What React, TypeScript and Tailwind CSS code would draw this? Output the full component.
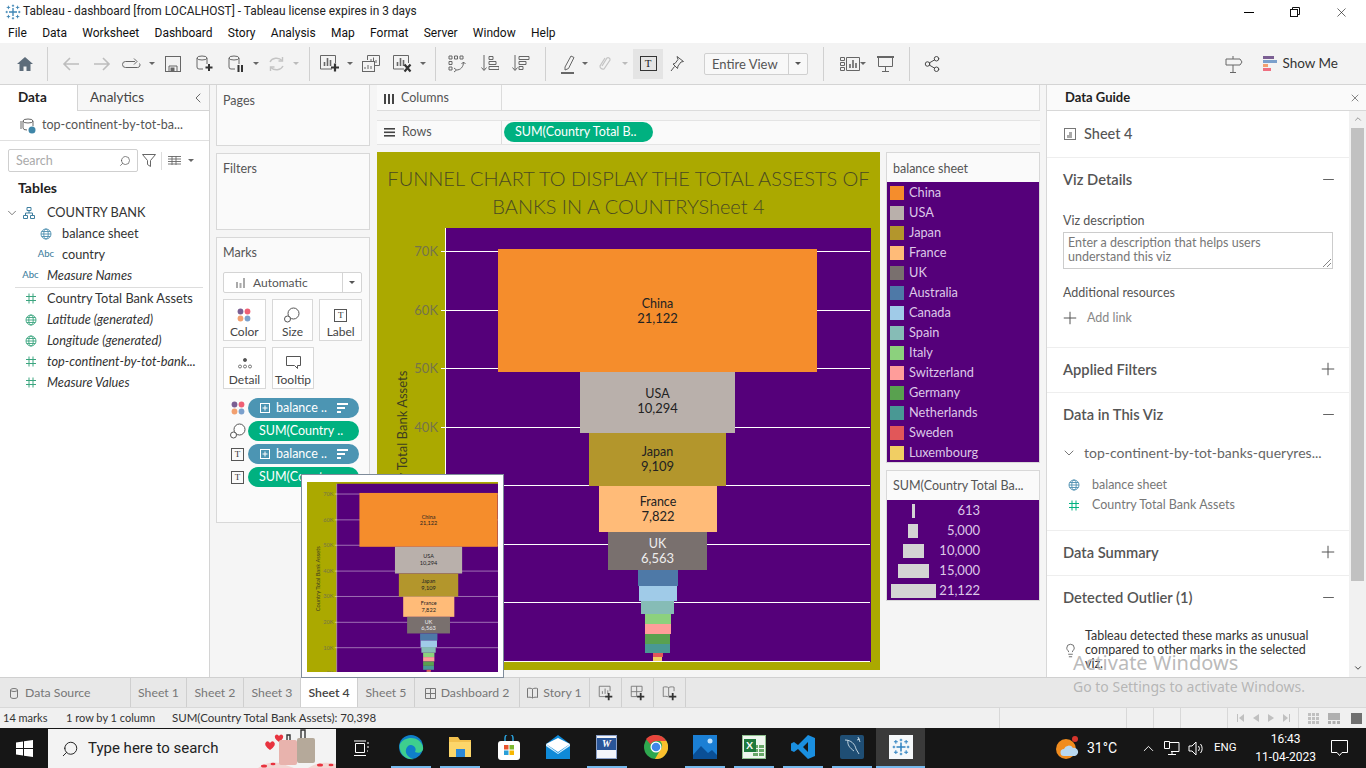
import React from 'react';
import { ChevronDown, ChevronLeft, Minus, Plus, Search, X, Lightbulb, ChevronUp, Share2 } from 'lucide-react';

const BARS = [
  { name: 'China', value: '21,122', color: '#f58d2c', x1: 498, x2: 817, y1: 249, y2: 372, text: '#222', ny: 307.5, vy: 322.5 },
  { name: 'USA', value: '10,294', color: '#b9b0ab', x1: 580, x2: 735, y1: 372, y2: 433, text: '#222', ny: 397.5, vy: 412.5 },
  { name: 'Japan', value: '9,109', color: '#b3962c', x1: 589, x2: 726, y1: 433, y2: 486, text: '#222', ny: 455.5, vy: 470.5 },
  { name: 'France', value: '7,822', color: '#ffbb78', x1: 599, x2: 717, y1: 486, y2: 532, text: '#222', ny: 505.5, vy: 521 },
  { name: 'UK', value: '6,563', color: '#79706e', x1: 608, x2: 707, y1: 532, y2: 570, text: '#eee', ny: 548, vy: 563 },
  { name: 'Australia', color: '#4e79a7', x1: 638, x2: 678, y1: 570, y2: 586 },
  { name: 'Canada', color: '#a0cbe8', x1: 639, x2: 677, y1: 586, y2: 601 },
  { name: 'Spain', color: '#86bcb6', x1: 641, x2: 674, y1: 601, y2: 614 },
  { name: 'Italy', color: '#8cd17d', x1: 645, x2: 671, y1: 614, y2: 624 },
  { name: 'Switzerland', color: '#ff9d9a', x1: 645, x2: 671, y1: 624, y2: 634 },
  { name: 'Germany', color: '#59a14f', x1: 645, x2: 670, y1: 634, y2: 644 },
  { name: 'Netherlands', color: '#499894', x1: 645, x2: 670, y1: 644, y2: 653 },
  { name: 'Sweden', color: '#e15759', x1: 653, x2: 663, y1: 653, y2: 657 },
  { name: 'Luxembourg', color: '#f1ce63', x1: 653, x2: 662, y1: 657, y2: 661 },
];

const TICKS = [
  { label: '70K', y: 251 },
  { label: '60K', y: 310 },
  { label: '50K', y: 368 },
  { label: '40K', y: 427 },
  { label: '30K', y: 485 },
  { label: '20K', y: 544 },
  { label: '10K', y: 602 },
  { label: '0K', y: 661 },
];

const SIZES = [
  { label: '613', w: 'w-[3px]' },
  { label: '5,000', w: 'w-[10px]' },
  { label: '10,000', w: 'w-[21px]' },
  { label: '15,000', w: 'w-[31px]' },
  { label: '21,122', w: 'w-[45px]' },
];

const MENU = ['File', 'Data', 'Worksheet', 'Dashboard', 'Story', 'Analysis', 'Map', 'Format', 'Server', 'Window', 'Help'];

// same drawing for the sheet and for its hover thumbnail, in screenshot units
const FunnelPlot = ({ viewBox, className }: { viewBox: string; className: string }) => (
  <svg viewBox={viewBox} preserveAspectRatio="none" className={className}>
    <rect x="377" y="150" width="503" height="520" fill="#aba900" />
    <rect x="445" y="228" width="426" height="434" fill="#55007a" />
    {TICKS.map((t) => (
      <g key={t.label}>
        <line x1="441" x2="870" y1={t.y + 0.5} y2={t.y + 0.5} stroke="#fff" />
        <text x="438" y={t.y + 5} textAnchor="end" fontSize="13" fill="#75744a">{t.label}</text>
      </g>
    ))}
    <line x1="445.5" x2="445.5" y1="228" y2="662" stroke="#fff" />
    <text transform="translate(407 445) rotate(-90)" textAnchor="middle" fontSize="13" fill="#3d3d20">Country Total Bank Assets</text>
    {BARS.map((b) => (
      <rect key={b.name} x={b.x1} y={b.y1} width={b.x2 - b.x1} height={b.y2 - b.y1} fill={b.color} />
    ))}
    {BARS.filter((b) => b.value).map((b) => (
      <g key={b.name} textAnchor="middle" fill={b.text}>
        <text x={(b.x1 + b.x2) / 2} y={b.ny} fontSize="12.5">{b.name}</text>
        <text x={(b.x1 + b.x2) / 2} y={b.vy} fontSize="13">{b.value}</text>
      </g>
    ))}
  </svg>
);

const Caret = ({ w, color = 'border-t-[#666]' }: { w: string; color?: string }) => (
  <div className={`${w} flex justify-center`}>
    <div className={`w-0 h-0 border-x-[3px] border-x-transparent border-t-[3px] ${color}`}></div>
  </div>
);

const Sep = ({ ml }: { ml: string }) => <div className={`${ml} w-px h-[34px] bg-[#d0d0d0]`}></div>;

const Color4 = () => (
  <svg width="14" height="14" viewBox="0 0 14 14">
    <circle cx="3.5" cy="3.5" r="2.9" fill="#7b5f93" /><circle cx="10.5" cy="3.5" r="2.9" fill="#ef5f74" />
    <circle cx="3.5" cy="10.5" r="2.9" fill="#f2a070" /><circle cx="10.5" cy="10.5" r="2.9" fill="#7ba0cc" />
  </svg>
);
const SizeIc = () => (
  <svg width="16" height="16" viewBox="0 0 16 16" fill="none" stroke="#555">
    <circle cx="9.5" cy="6.5" r="5.5" fill="#fff" /><circle cx="3.5" cy="12" r="3" fill="#fff" />
  </svg>
);
const TextIc = () => (
  <div className="w-[13px] h-[13px] border border-[#555] flex items-center justify-center text-[9px] leading-none text-[#333] [font-family:'Liberation_Serif',serif]">T</div>
);
const Globe = ({ c = '#4d8fb0' }: { c?: string }) => (
  <svg width="12" height="12" viewBox="0 0 12 12" fill="none" stroke={c} strokeWidth="0.9">
    <circle cx="6" cy="6" r="5" /><ellipse cx="6" cy="6" rx="2.2" ry="5" /><path d="M1 6h10M1.7 3.5h8.6M1.7 8.5h8.6" />
  </svg>
);
const Hash = ({ c = '#3ba57f' }: { c?: string }) => (
  <svg width="10" height="11" viewBox="0 0 10 11" fill="none" stroke={c} strokeWidth="1">
    <path d="M3 0.5v10M7 0.5v10M0 3.5h10M0 7.5h10" />
  </svg>
);
const Sorted = () => (
  <svg width="11" height="10" viewBox="0 0 11 10" fill="#fff"><rect width="11" height="2" /><rect y="4" width="8" height="2" /><rect y="8" width="4" height="2" /></svg>
);
const PlusBox = () => (
  <svg width="10" height="10" viewBox="0 0 10 10" fill="none" stroke="#fff"><rect x="0.5" y="0.5" width="9" height="9" /><path d="M5 2.5v5M2.5 5h5" /></svg>
);
const PlusMark = () => (
  <path d="M12 10h2v3h3v2h-3v3h-2v-3H9v-2h3z" fill="#333" stroke="none" />
);
const TableauMark = ({ c = '#3f86b5', size = 14 }: { c?: string; size?: number }) => (
  <svg width={size} height={size} viewBox="0 0 14 14" stroke={c} fill="none">
    <path d="M7 3.5v7M3.5 7h7" strokeWidth="1.2" />
    <path d="M3 1.5v3M1.5 3h3M11 1.5v3M9.500 3h3M3 9.500v3M1.500 11h3M11 9.500v3M9.500 11h3M7 0.500v2M6 1.500h2M7 11.500v2M6 12.500h2M1.500 6v2M.5 7h2M12.500 6v2M11.500 7h2" strokeWidth="0.8" />
  </svg>
);

const Pill = ({ icon, blue, text }: { icon: React.ReactNode; blue?: boolean; text: string }) => (
  <div className="flex items-center h-[20px] mb-[3px]">
    <div className="w-[25px] pl-[4px] flex items-center justify-center">{icon}</div>
    <div className={`w-[111px] h-[20px] rounded-full text-white text-[12.5px] flex items-center ${blue ? 'bg-[#4c95b3] pl-[12px] gap-[6px]' : 'bg-[#00b180] pl-[11px]'}`}>
      {blue && <PlusBox />}
      <span className="whitespace-nowrap">{text}</span>
      {blue && <span className="ml-[4px]"><Sorted /></span>}
    </div>
  </div>
);

const MarkBtn = ({ icon, label, w = 'w-[43px]' }: { icon: React.ReactNode; label: string; w?: string }) => (
  <div className={`${w} h-[42px] border border-[#d8d8d8] bg-white flex flex-col items-center pt-[6px] text-[12px] text-[#444]`}>
    <div className="h-[18px] flex items-center">{icon}</div>
    <span className="leading-[14px] mt-[1px]">{label}</span>
  </div>
);

const Field = ({ icon, text, italic, indent }: { icon: React.ReactNode; text: string; italic?: boolean; indent?: boolean }) => (
  <div className={`flex items-center h-[21px] text-[12.75px] text-[#333] whitespace-nowrap ${italic ? 'italic' : ''}`}>
    <div className={`${indent ? 'w-[62px] pl-[30px]' : 'w-[47px] pl-[14px]'} flex justify-center`}>{icon}</div>
    <span>{text}</span>
  </div>
);

const Abc = () => <span className="text-[9.5px] not-italic text-[#3f7fa0] font-medium">Abc</span>;

const GuideHead = ({ title, open }: { title: string; open?: boolean }) => (
  <div className="flex items-center justify-between h-[24px] pr-[11px]">
    <span className="text-[14.7px] font-semibold text-[#555]">{title}</span>
    <span className="w-[20px] flex justify-center">
      {open ? <Minus size={17} strokeWidth={1.3} color="#555" /> : <Plus size={20} strokeWidth={1.2} color="#555" />}
    </span>
  </div>
);

const Tab = ({ w, text, icon, active, left }: { w: string; text: string; icon?: React.ReactNode; active?: boolean; left?: boolean }) => (
  <div className={`${w} h-full pt-px border-r border-[#cfcfcf] flex items-center text-[12.25px] ${left ? 'justify-start pl-[10px] gap-[7px]' : 'justify-center gap-[5px]'} ${active ? 'bg-white text-[#444] font-semibold' : 'text-[#777]'}`}>
    {icon}{text}
  </div>
);

const TaskIcon = ({ children, open }: { children: React.ReactNode; open?: boolean }) => (
  <div className="w-[49px] h-[40px] flex flex-col items-center">
    <div className="flex-1 flex items-center justify-center">{children}</div>
    <div className={`w-[40px] h-[2px] ${open ? 'bg-[#76b9ed]' : ''}`}></div>
  </div>
);

const App: React.FC = () => {
  return (
    <div className="relative w-[1366px] h-[768px] overflow-hidden bg-white flex flex-col [font-family:Lato,sans-serif]">
      {/* Title bar */}
      <div className="h-[22px] flex items-center pl-[3px] pt-[2px] bg-white text-[11.9px] text-[#222] [font-family:Roboto,sans-serif]">
        <div className="w-[20px] flex justify-center"><TableauMark size={16} /></div>
        <span className="whitespace-nowrap">Tableau - dashboard [from LOCALHOST] - Tableau license expires in 3 days</span>
        <div className="ml-auto mr-[2px] flex items-center">
          <div className="w-[46px] flex justify-center"><div className="w-[10px] h-px bg-black"></div></div>
          <div className="w-[46px] flex justify-center">
            <svg width="10" height="10" viewBox="0 0 10 10" fill="none" stroke="#111"><rect x="0.5" y="2.5" width="7" height="7" /><path d="M2.5 2.5v-2h7v7h-2" /></svg>
          </div>
          <div className="w-[46px] flex justify-center"><X size={15} strokeWidth={1} color="#111" /></div>
        </div>
      </div>

      {/* Menu */}
      <div className="h-[21px] flex items-center pl-[8px] gap-[15.3px] text-[12px] text-[#111] [font-family:Roboto,sans-serif]">
        {MENU.map((m) => <span key={m}>{m}</span>)}
      </div>

      {/* Toolbar */}
      <div className="h-[42px] bg-[#f3f3f3] border-b border-[#d4d4d4] flex items-center pl-[9px] text-[#666]">
        <div className="w-[32px] flex justify-center">
          <svg width="16" height="14" viewBox="0 0 16 14" fill="#5d6c7a"><path d="M8 0L0 7h2.5v7h4V9.5h3V14h4V7H16z" /></svg>
        </div>
        <Sep ml="ml-[6px]" />
        <div className="ml-[6px] w-[32px] flex justify-center">
          <svg width="17" height="14" viewBox="0 0 17 14" fill="none" stroke="#bdbdbd" strokeWidth="1.6"><path d="M17 7H2M8 1L2 7l6 6" /></svg>
        </div>
        <div className="w-[32px] flex justify-center">
          <svg width="17" height="14" viewBox="0 0 17 14" fill="none" stroke="#bdbdbd" strokeWidth="1.6"><path d="M0 7h15M9 1l6 6-6 6" /></svg>
        </div>
        <div className="w-[26px] flex justify-center">
          <svg width="19" height="12" viewBox="0 0 19 12" fill="none" stroke="#666"><path d="M13 3.5H3.5a2.5 2.5 0 0 0 0 6h12a2.5 2.5 0 0 0 2-4" /><path d="M12 0.5l3 3-3 3" /></svg>
        </div>
        <Caret w="w-[16px]" />
        <div className="w-[26px] flex justify-center">
          <svg width="16" height="16" viewBox="0 0 16 16" fill="none" stroke="#666"><rect x="0.5" y="0.5" width="15" height="15" /><path d="M4 15v-5h8v5" /><rect x="6" y="12" width="3" height="3" fill="#666" /></svg>
        </div>
        <div className="w-[38px] flex justify-center">
          <svg width="18" height="18" viewBox="0 0 18 18" fill="none" stroke="#666"><ellipse cx="6" cy="3" rx="5" ry="2" /><path d="M1 3v9a2 2 0 0 0 2 2h4M11 3v6" /><path d="M13 9v7M9.5 12.5h7" stroke="#333" strokeWidth="2" /></svg>
        </div>
        <div className="w-[24px] flex justify-center">
          <svg width="16" height="18" viewBox="0 0 16 18" fill="none" stroke="#666"><ellipse cx="6" cy="3" rx="5" ry="2" /><path d="M1 3v9a2 2 0 0 0 2 2h4M11 3v6" /><path d="M10.5 10v7M14 10v7" stroke="#333" strokeWidth="2" /></svg>
        </div>
        <Caret w="w-[16px]" />
        <div className="w-[24px] flex justify-center">
          <svg width="17" height="16" viewBox="0 0 17 16" fill="none" stroke="#c4c4c4" strokeWidth="1.4"><path d="M2 6a7 6 0 0 1 12-1.5M15 10a7 6 0 0 1-12 1.5" /><path d="M14.5 1v4h-4M2.5 15v-4h4" /></svg>
        </div>
        <Caret w="w-[16px]" color="border-t-[#bbb]" />
        <Sep ml="ml-[5px]" />
        <div className="ml-[5px] w-[30px] flex justify-center">
          <svg width="20" height="19" viewBox="0 0 20 19" fill="none" stroke="#666"><path d="M12 15H0.5V1.5h15V9" /><path d="M4.5 12V8M7.5 12V4M10.5 12V6" strokeWidth="1.6" /><path d="M15 9.5v8M11 13.5h8" stroke="#333" strokeWidth="2.2" /></svg>
        </div>
        <Caret w="w-[10px]" />
        <div className="w-[32px] flex justify-center">
          <svg width="18" height="17" viewBox="0 0 18 17" fill="none" stroke="#666"><path d="M5.5 5V0.5h12v10H13" /><path d="M9 8V4M11.5 8V2.5M14 8V5" /><rect x="0.5" y="6.5" width="12" height="10" fill="#f3f3f3" /><path d="M3 14v-2M6 14v-4M9 14v-3" /></svg>
        </div>
        <div className="w-[32px] flex justify-center">
          <svg width="20" height="19" viewBox="0 0 20 19" fill="none" stroke="#666"><path d="M11 15H0.5V1.5h15V9" /><path d="M4.5 12V8M7.5 12V4M10.5 12V6" strokeWidth="1.6" /><path d="M11.5 10.5l6 7M17.5 10.5l-6 7" stroke="#333" strokeWidth="2.2" /></svg>
        </div>
        <Caret w="w-[8px]" />
        <Sep ml="ml-[8px]" />
        <div className="w-[42px] flex justify-center">
          <svg width="18" height="18" viewBox="0 0 18 18" fill="none" stroke="#666"><path d="M1 1h3v3H1zM6.5 1h3v3h-3zM12 1h3v3h-3zM1 6.5h3v3H1zM1 12h3v3H1z" /><path d="M15.5 7c0 5-3 8-7 8M6 13l2.5 2L6 17M13.5 9l2-2 2 2" /></svg>
        </div>
        <div className="w-[24px] flex justify-center">
          <svg width="18" height="17" viewBox="0 0 18 17" fill="none" stroke="#666"><path d="M3 0v15M0.5 12.5L3 15.5l2.5-3" /><path d="M8 1.5h4v3H8zM8 6.5h7v3H8zM8 11.5h10v3H8z" /></svg>
        </div>
        <div className="w-[38px] flex justify-center">
          <svg width="18" height="17" viewBox="0 0 18 17" fill="none" stroke="#666"><path d="M3 0v15M0.5 12.5L3 15.5l2.5-3" /><path d="M7 1.5h10v3H7zM7 6.5h7v3H7zM7 11.5h4v3H7z" /></svg>
        </div>
        <Sep ml="ml-[5px]" />
        <div className="ml-[10px] w-[24px] flex justify-center">
          <svg width="14" height="20" viewBox="0 0 14 20" fill="none" stroke="#666"><path d="M4 13L10 2l3 1.5L7.5 14.5 4 16z" /><path d="M0 19h13" stroke="#444" strokeWidth="1.6" /></svg>
        </div>
        <Caret w="w-[10px]" />
        <div className="w-[30px] flex justify-center">
          <svg width="12" height="17" viewBox="0 0 12 17" fill="none" stroke="#c4c4c4" strokeWidth="1.2"><path d="M3 11l5-8a2 2 0 0 1 3 2l-6 9a3 3 0 0 1-4-3l5-8" /></svg>
        </div>
        <Caret w="w-[10px]" color="border-t-[#bbb]" />
        <div className="ml-[3px] w-[30px] h-[30px] bg-[#e4e4e4] flex items-center justify-center">
          <div className="w-[17px] h-[15px] border border-[#333] flex items-center justify-center text-[11px] leading-none text-[#222] [font-family:'Liberation_Serif',serif]">T</div>
        </div>
        <div className="w-[28px] flex justify-center">
          <svg width="14" height="16" viewBox="0 0 14 16" fill="none" stroke="#555"><path d="M7 0.5l6.5 5-2.5.5-3 4-.5 2.500L3 8l2-.5 3-4z" /><path d="M4.500 10.500L1 15" /></svg>
        </div>
        <div className="ml-[13px] w-[104px] h-[22px] bg-[#f8f8f8] border border-[#d0d0d0] rounded-[2px] flex items-center text-[13px] text-[#555]">
          <span className="w-[84px] pl-[7px] border-r border-[#d0d0d0] leading-[20px]">Entire View</span>
          <Caret w="w-[18px]" color="border-t-[#555]" />
        </div>
        <Sep ml="ml-[15px]" />
        <div className="ml-[16px] w-[20px] flex justify-center">
          <svg width="20" height="14" viewBox="0 0 20 14" fill="none" stroke="#666"><path d="M0.5 0.5h4v3h-4zM0.5 5.5h4v3h-4zM0.5 10.500h4v3h-4zM6.500 0.500h13v13h-13z" /><path d="M10 11V7M13 11V3M16 11V6" strokeWidth="1.6" /></svg>
        </div>
        <Caret w="w-[6px]" />
        <div className="w-[38px] flex justify-center">
          <svg width="17" height="16" viewBox="0 0 17 16" fill="none" stroke="#666"><path d="M0 1h17" strokeWidth="2" /><path d="M1.500 1v9.500h14V1M8.500 10.500V15M5 15.500h7" /></svg>
        </div>
        <Sep ml="ml-[5px]" />
        <div className="w-[44px] flex justify-center"><Share2 size={18} strokeWidth={1.3} color="#444" /></div>
        <div className="ml-auto w-[24px] flex justify-center">
          <svg width="18" height="18" viewBox="0 0 18 18" fill="none" stroke="#666"><path d="M1 4h14l2 3-2 3H1zM8 1v3M8 10v7M5 17.500h6" /></svg>
        </div>
        <div className="ml-[17px] w-[14px] flex flex-col gap-px">
          <div className="w-[11px] h-[3px] bg-[#7b5f93]"></div>
          <div className="w-[14px] h-[3px] bg-[#7ba0cc]"></div>
          <div className="w-[5px] h-[3px] bg-[#f2a070]"></div>
          <div className="w-[8px] h-[3px] bg-[#ef6f80]"></div>
        </div>
        <span className="ml-[5px] mr-[28px] text-[13.5px] text-[#333]">Show Me</span>
      </div>

      {/* Main */}
      <div className="h-[592px] flex bg-[#f5f5f5]">
        {/* Data pane */}
        <div className="w-[210px] bg-white border-r border-[#d4d4d4] flex flex-col">
          <div className="h-[26px] flex text-[13.5px]">
            <div className="w-[77px] pl-[18px] leading-[25px] font-bold text-[#222]">Data</div>
            <div className="flex-1 bg-[#f7f7f7] border-l border-b border-[#d4d4d4] flex items-center pl-[12px] text-[#444]">
              Analytics
              <ChevronLeft size={16} strokeWidth={1.3} color="#555" className="ml-auto mr-[3px]" />
            </div>
          </div>
          <div className="h-[30px] border-b border-[#e0e0e0] flex items-center pl-[20px] gap-[6px] text-[12.5px] text-[#555]">
            <svg width="16" height="16" viewBox="0 0 16 16" fill="none" stroke="#666"><ellipse cx="8" cy="3" rx="5" ry="2" /><path d="M3 3v7a4 2 0 0 0 4 2M13 3v5" /><path d="M1 3v8" /><circle cx="12" cy="12" r="3.500" fill="#3f86a8" stroke="none" /></svg>
            <span>top-continent-by-tot-ba...</span>
          </div>
          <div className="flex items-center pl-[8px] mt-[8px] h-[23px]">
            <div className="w-[130px] h-[23px] pt-px border border-[#cfcfcf] rounded-[2px] flex items-center pl-[7px] pr-[6px] text-[12.5px] text-[#aaa]">
              Search
              <Search size={12} color="#555" strokeWidth={1.4} className="ml-auto -scale-x-100" />
            </div>
            <svg className="ml-[4px]" width="14" height="13" viewBox="0 0 14 13" fill="none" stroke="#666"><path d="M0.500 0.500h13L8.500 6.500v6l-3-2v-4z" /></svg>
            <div className="ml-[5px] w-px h-[18px] bg-[#ddd]"></div>
            <svg className="ml-[6px]" width="13" height="9" viewBox="0 0 13 9" stroke="#666" fill="none"><path d="M0 .5h13M0 3h13M0 5.500h13M0 8h13M4 0v9M8 0v9" strokeWidth="0.9" /></svg>
            <Caret w="ml-[5px] w-[10px]" color="border-t-[#666]" />
          </div>
          <div className="pl-[18px] mt-[5px] h-[22px] leading-[22px] text-[14px] font-bold text-[#222]">Tables</div>
          <div className="mt-[3px]">
            <div className="flex items-center h-[21px] text-[12.75px] text-[#333]">
              <ChevronDown size={14} strokeWidth={1.3} color="#555" className="ml-[5px]" />
              <svg className="ml-[4px]" width="12" height="12" viewBox="0 0 12 12" fill="none" stroke="#3f7fa0"><path d="M4 .5h4v3H4zM.5 8.500h4v3h-4zM7.500 8.500h4v3h-4zM6 3.500V6M2.500 8.500V6h7v2.500" /></svg>
              <span className="ml-[12px]">COUNTRY BANK</span>
            </div>
            <Field indent icon={<Globe />} text="balance sheet" />
            <Field indent icon={<Abc />} text="country" />
            <Field italic icon={<Abc />} text="Measure Names" />
            <div className="ml-[15px] mr-[6px] h-px bg-[#ddd] mt-px"></div>
            <Field icon={<Hash />} text="Country Total Bank Assets" />
            <Field italic icon={<Globe c="#3ba57f" />} text="Latitude (generated)" />
            <Field italic icon={<Globe c="#3ba57f" />} text="Longitude (generated)" />
            <Field italic icon={<Hash />} text="top-continent-by-tot-bank..." />
            <Field italic icon={<Hash />} text="Measure Values" />
          </div>
        </div>

        {/* Pages, filters, marks */}
        <div className="w-[166px] px-[6px] flex flex-col">
          <div className="h-[61px] bg-[#fafafa] border-x border-b border-[#d8d8d8] pl-[6px] pt-[7px] text-[12.5px] text-[#555]">Pages</div>
          <div className="mt-[7px] h-[77px] bg-[#fafafa] border border-[#d8d8d8] pl-[6px] pt-[6px] text-[12.5px] text-[#555]">Filters</div>
          <div className="mt-[7px] h-[286px] bg-[#fafafa] border border-[#d8d8d8] pl-[6px] pt-[6px] pr-[7px]">
            <div className="text-[12.5px] text-[#555] h-[19px]">Marks</div>
            <div className="mt-[9px] h-[21px] bg-white border border-[#d4d4d4] rounded-[2px] flex items-center text-[12px] text-[#555]">
              <div className="flex-1 flex items-center pl-[12px] gap-[7px] border-r border-[#d4d4d4] h-full">
                <svg width="10" height="10" viewBox="0 0 10 10" fill="#aaa"><rect y="4" width="2" height="6" /><rect x="3.500" y="5" width="2" height="5" /><rect x="7" y="0" width="2" height="10" /></svg>
                Automatic
              </div>
              <Caret w="w-[18px]" color="border-t-[#555]" />
            </div>
            <div className="mt-[6px] flex gap-[6px]">
              <MarkBtn icon={<Color4 />} label="Color" />
              <MarkBtn icon={<SizeIc />} label="Size" w="w-[42px]" />
              <MarkBtn icon={<TextIc />} label="Label" />
            </div>
            <div className="mt-[6px] flex gap-[6px]">
              <MarkBtn label="Detail" icon={
                <svg width="14" height="11" viewBox="0 0 14 11" fill="none" stroke="#555" strokeWidth="0.8"><circle cx="7" cy="2" r="1.600" fill="#555" /><circle cx="2" cy="8.500" r="1.500" /><circle cx="7" cy="8.500" r="1.500" /><circle cx="12" cy="8.500" r="1.500" /></svg>
              } />
              <MarkBtn label="Tooltip" w="w-[42px]" icon={
                <svg width="15" height="14" viewBox="0 0 15 14" fill="none" stroke="#555"><path d="M0.500 0.500h14v9h-3v3l-3-3h-8z" /></svg>
              } />
            </div>
            <div className="mt-[9px]">
              <Pill blue icon={<Color4 />} text="balance .." />
              <Pill icon={<SizeIc />} text="SUM(Country .." />
              <Pill blue icon={<TextIc />} text="balance .." />
              <Pill icon={<TextIc />} text="SUM(Country .." />
            </div>
          </div>
        </div>

        {/* Shelves and the sheet */}
        <div className="w-[670px] pl-px pr-[6px] flex flex-col">
          <div className="h-[26px] flex bg-[#fafafa] border-b border-[#dcdcdc] border-r">
            <div className="w-[125px] pt-[2px] border-r border-[#dcdcdc] flex items-center pl-[7px] gap-[6px] text-[12.5px] text-[#555]">
              <svg width="11" height="10" viewBox="0 0 11 10" fill="#444"><rect width="2" height="10" /><rect x="4" width="2" height="10" /><rect x="8" width="2" height="10" /></svg>
              Columns
            </div>
          </div>
          <div className="mt-[9px] h-[25px] flex bg-[#fafafa] border-b border-t border-[#e4e4e4]">
            <div className="w-[125px] border-r border-[#dcdcdc] flex items-center pl-[7px] gap-[7px] text-[12.5px] text-[#555]">
              <svg width="11" height="9" viewBox="0 0 11 9" fill="#444"><rect width="11" height="1.600" /><rect y="3.500" width="11" height="1.600" /><rect y="7" width="11" height="1.600" /></svg>
              Rows
            </div>
            <div className="ml-[2px] mt-px w-[149px] h-[20px] rounded-full bg-[#00b180] text-white text-[12.5px] pl-[11px] leading-[20px] whitespace-nowrap">SUM(Country Total B..</div>
          </div>
          <div className="mt-[7px] flex">
            <div className="w-[503px] h-[518px] bg-[#aba900] flex flex-col">
              <div className="h-[76px] pt-[12px] px-[8px] text-center text-[20px] font-light leading-[28px] text-[#4a4a22]">
                FUNNEL CHART TO DISPLAY THE TOTAL ASSESTS OF BANKS IN A COUNTRYSheet 4
              </div>
              <FunnelPlot viewBox="377 228 503 442" className="w-[503px] h-[442px] block" />
            </div>
            <div className="ml-[6px] w-[154px] flex flex-col">
              <div className="h-[311px] border border-[#d8d8d8]">
                <div className="h-[29px] bg-[#fafafa] pl-[6px] leading-[31px] text-[12.5px] text-[#555]">balance sheet</div>
                <div className="h-[280px] bg-[#55007a] pl-[3px] pt-px">
                  {BARS.map((b) => (
                    <div key={b.name} className="h-[20px] flex items-center gap-[5px] text-[12.75px] text-[#ddc8e8]">
                      <div className="w-[14px] h-[14px]" style={{ backgroundColor: b.color }}></div>
                      {b.name}
                    </div>
                  ))}
                </div>
              </div>
              <div className="mt-[7px] h-[131px] border border-[#d8d8d8]">
                <div className="h-[29px] bg-[#fafafa] pl-[6px] leading-[29px] text-[12.5px] text-[#555] whitespace-nowrap overflow-hidden">SUM(Country Total Ba...</div>
                <div className="h-[100px] bg-[#55007a] pt-[1px]">
                  {SIZES.map((s) => (
                    <div key={s.label} className="h-[20px] flex items-center text-[13px] text-[#ddc8e8]">
                      <div className="w-[52px] flex justify-center"><div className={`${s.w} h-[14px] bg-[#d4d4d4]`}></div></div>
                      <span className="w-[41px] text-right">{s.label}</span>
                    </div>
                  ))}
                </div>
              </div>
            </div>
          </div>
        </div>

        {/* Data Guide */}
        <div className="w-[320px] border-l border-[#d8d8d8] bg-white flex flex-col">
          <div className="h-[26px] bg-[#fafafa] border-b border-[#d8d8d8] flex items-center pl-[18px] pr-[5px] text-[13px] font-bold text-[#222]">
            Data Guide
            <X size={12} strokeWidth={1.4} color="#555" className="ml-auto" />
          </div>
          <div className="flex-1 flex overflow-hidden">
            <div className="flex-1 overflow-hidden">
              <div className="h-[47px] border-b border-[#eee] flex items-center pl-[17px] gap-[8px] text-[14.5px] text-[#555]">
                <svg width="12" height="12" viewBox="0 0 12 12" fill="none" stroke="#777"><rect x="0.500" y="0.500" width="11" height="11" /><path d="M3 10V7h2V4h3v6z" fill="#aaa" stroke="none" /></svg>
                <span className="font-medium">Sheet 4</span>
              </div>
              <div className="h-[190px] border-b border-[#eee] pl-[16px] pt-[9px]">
                <GuideHead title="Viz Details" open />
                <div className="mt-[22px] text-[12.5px] text-[#555] leading-[16px]">Viz description</div>
                <div className="relative mt-[3px] w-[270px] h-[37px] border border-[#ccc] pl-[4px] pr-[50px] pt-[3px] text-[12.5px] leading-[14px] text-[#777]">
                  Enter a description that helps users understand this viz
                  <svg className="absolute right-px bottom-px" width="8" height="8" viewBox="0 0 8 8" stroke="#666" strokeWidth="0.8"><path d="M8 0L0 8M8 4L4 8" /></svg>
                </div>
                <div className="mt-[16px] text-[12.5px] text-[#555] leading-[16px]">Additional resources</div>
                <div className="mt-[7px] flex items-center gap-[7px] text-[12.5px] text-[#888] leading-[16px]">
                  <Plus size={20} strokeWidth={1.2} color="#555" className="-ml-[3px]" />Add link
                </div>
              </div>
              <div className="h-[45px] border-b border-[#eee] pl-[16px] pt-[9px]"><GuideHead title="Applied Filters" /></div>
              <div className="h-[138px] border-b border-[#eee] pl-[16px] pt-[9px]">
                <GuideHead title="Data in This Viz" open />
                <div className="mt-[16px] flex items-center text-[14px] text-[#666] whitespace-nowrap">
                  <ChevronDown size={16} strokeWidth={1.2} color="#555" className="-ml-[2px] mr-[7px]" />
                  top-continent-by-tot-banks-queryres...
                </div>
                <div className="mt-[12px] flex items-center gap-[12px] h-[20px] pl-[5px] text-[12.5px] text-[#777]"><Globe />balance sheet</div>
                <div className="flex items-center gap-[13px] h-[20px] pl-[6px] text-[12.5px] text-[#777]"><Hash c="#00b180" />Country Total Bank Assets</div>
              </div>
              <div className="h-[45px] border-b border-[#eee] pl-[16px] pt-[9px]"><GuideHead title="Data Summary" /></div>
              <div className="pl-[16px] pt-[9px]">
                <GuideHead title="Detected Outlier (1)" open />
                <div className="mt-[20px] flex items-center gap-[7px]">
                  <Lightbulb size={15} strokeWidth={1.2} color="#444" />
                  <div className="w-[238px] text-[12.5px] leading-[14px] text-[#333]">Tableau detected these marks as unusual compared to other marks in the selected viz.</div>
                </div>
              </div>
            </div>
            <div className="w-[17px] shrink-0 bg-[#f1f1f1] flex flex-col items-center">
              <ChevronUp size={10} strokeWidth={2} color="#888" className="mt-[3px] mb-[4px]" />
              <div className="w-[13px] h-[453px] bg-[#c1c1c1]"></div>
              <ChevronDown size={10} strokeWidth={2.4} color="#444" className="mt-auto mb-[4px]" />
            </div>
          </div>
        </div>
      </div>

      {/* Sheet tabs */}
      <div className="h-[30px] bg-[#e8e8e8] border-t border-[#d0d0d0] flex">
        <Tab w="w-[131px]" left text="Data Source" icon={<svg width="8" height="11" viewBox="0 0 8 11" fill="none" stroke="#777"><ellipse cx="4" cy="2" rx="3.500" ry="1.500" /><path d="M.5 2v7a3.500 1.500 0 0 0 7 0V2" /></svg>} />
        <Tab w="w-[56px]" text="Sheet 1" />
        <Tab w="w-[57px]" text="Sheet 2" />
        <Tab w="w-[57px]" text="Sheet 3" />
        <Tab w="w-[57px]" text="Sheet 4" active />
        <Tab w="w-[57px]" text="Sheet 5" />
        <Tab w="w-[105px]" text="Dashboard 2" icon={<svg width="11" height="11" viewBox="0 0 11 11" fill="none" stroke="#777"><path d="M.5.5h10v10H.5zM5.500.5v10M.5 5.500h10" /></svg>} />
        <Tab w="w-[70px]" text="Story 1" icon={<svg width="11" height="12" viewBox="0 0 11 12" fill="none" stroke="#777"><path d="M5.500 2C4 1 2 1 .5 1.500v9c1.500-.5 3.500-.5 5 .5 1.500-1 3.500-1 5-.5v-9C9 1 7 1 5.500 2zM5.500 2v9" /></svg>} />
        <div className="w-[32px] h-full border-r border-[#cfcfcf] flex items-center justify-center">
          <svg width="18" height="18" viewBox="0 0 20 20" fill="none" stroke="#777"><path d="M9 14H2.500V2.500h12V8M6 11V8M9 11V5M12 11V7" /><PlusMark /></svg>
        </div>
        <div className="w-[32px] h-full border-r border-[#cfcfcf] flex items-center justify-center">
          <svg width="18" height="18" viewBox="0 0 20 20" fill="none" stroke="#777"><path d="M9 14H2.500V2.500h12V8M8.500 2.500V14M2.500 8.500h12" /><PlusMark /></svg>
        </div>
        <div className="w-[32px] h-full border-r border-[#cfcfcf] flex items-center justify-center">
          <svg width="18" height="18" viewBox="0 0 20 20" fill="none" stroke="#777"><path d="M8.500 4C7 3 4 3 2.500 3.500V14c1.500-.5 4-.5 6 .5M8.500 4c1.500-1 4-1 6-.5V8M8.500 4v10" /><PlusMark /></svg>
        </div>
      </div>

      {/* Status bar */}
      <div className="h-[21px] bg-[#f0f0f0] border-t border-[#d8d8d8] flex items-center text-[11.5px] text-[#333] whitespace-nowrap">
        <span className="w-[66px] pl-[3px] text-[11px]">14 marks</span>
        <span className="w-[106px] text-[11px]">1 row by 1 column</span>
        <span className="w-[827px]">SUM(Country Total Bank Assets): 70,398</span>
        <div className="w-[127px] h-full border-l border-[#d8d8d8]"></div>
        <div className="w-[27px] h-full border-l border-[#d8d8d8]"></div>
        <div className="w-[27px] h-full border-l border-[#d8d8d8]"></div>
        <div className="w-[47px] h-full border-l border-[#d8d8d8]"></div>
        <div className="w-[71px] h-full border-l border-[#d8d8d8] flex items-center justify-center gap-[9px]">
          <svg width="7" height="8" viewBox="0 0 7 8" fill="#c0c0c0"><rect width="1" height="8" /><path d="M7 0v8L2 4z" /></svg>
          <svg width="6" height="8" viewBox="0 0 6 8" fill="#c0c0c0"><path d="M6 0v8L0 4z" /></svg>
          <svg width="6" height="8" viewBox="0 0 6 8" fill="#c0c0c0"><path d="M0 0v8l6-4z" /></svg>
          <svg width="7" height="8" viewBox="0 0 7 8" fill="#c0c0c0"><rect x="6" width="1" height="8" /><path d="M0 0v8l5-4z" /></svg>
        </div>
        <div className="flex-1 h-full border-l border-[#d8d8d8] flex items-center pl-[9px] gap-[9px]">
          <svg width="11" height="11" viewBox="0 0 11 11" fill="#c0c0c0"><path d="M0 0h3v3H0zM4 0h3v3H4zM8 0h3v3H8zM0 4h3v3H0zM4 4h3v3H4zM8 4h3v3H8zM0 8h3v3H0zM4 8h3v3H4zM8 8h3v3H8z" /></svg>
          <svg width="12" height="11" viewBox="0 0 12 11" fill="#b0b0b0"><rect width="12" height="7" /><rect y="8" width="3" height="3" /><rect x="4.500" y="8" width="3" height="3" /><rect x="9" y="8" width="3" height="3" /></svg>
          <div className="ml-[2px] w-[11px] h-[11px] bg-[#707070]"></div>
        </div>
      </div>

      {/* Taskbar */}
      <div className="h-[40px] bg-[#161616] flex items-center text-white">
        <div className="w-[48px] flex justify-center">
          <svg width="17" height="17" viewBox="0 0 17 17" fill="#fff"><path d="M0 2.500l7-1v6.500H0zM8 1.300L17 0v8H8zM0 9h7v6.500l-7-1zM8 9h9v8l-9-1.300z" /></svg>
        </div>
        <div className="relative w-[288px] h-[39px] mt-px bg-[#f3f3f3] flex items-center pl-[13px] text-[#222] overflow-hidden">
          <Search size={18} strokeWidth={1.3} color="#222" className="-scale-x-100" />
          <span className="ml-[9px] text-[15px] [font-family:Roboto,sans-serif] whitespace-nowrap">Type here to search</span>
          <svg className="absolute right-0 top-0" width="78" height="39" viewBox="0 0 78 39">
            <path d="M12 21q-7-5-4-8 2-2 4 1 2-3 4-1 3 3-4 8zM21 13q-6-4-3.500-7 2-1.500 3.500 1 1.500-2.500 3.500-1 2.500 3-3.500 7z" fill="#e8333f" />
            <path d="M0 39q10-7 22-5l14 5zM50 39q12-8 28-4v4z" fill="#f2d6d3" />
            <rect x="21" y="11" width="18" height="25" rx="2" fill="#e8b3ad" /><rect x="39" y="9" width="18" height="25" rx="2" fill="#b5a99a" />
            <path d="M29 11V6h3v5M43 9V1h4v8" fill="none" stroke="#333" strokeWidth="1.400" />
            <ellipse cx="6" cy="37" rx="3" ry="1.500" fill="#e8333f" /><ellipse cx="15" cy="35" rx="2.500" ry="1.300" fill="#e8333f" />
            <ellipse cx="62" cy="36" rx="3" ry="1.500" fill="#e8333f" /><ellipse cx="73" cy="36" rx="2.500" ry="1.300" fill="#e8333f" />
          </svg>
        </div>
        {/* app icons */}
        <div className="w-[50px] flex justify-center">
          <svg width="17" height="17" viewBox="0 0 17 17" fill="none" stroke="#fff"><path d="M2.500 3.500h9v9h-9zM1 1h12M1 15.500h12M14 3h2M14 7h2M14 11h1" /></svg>
        </div>
        <TaskIcon open>
          <svg width="26" height="26" viewBox="0 0 26 26"><circle cx="13" cy="13" r="12" fill="#0f7fc9" /><path d="M2 10c4-8 20-9 23 3 1 5-4 7-8 5 2-4-1-7-5-7-4 1-6 7-2 11 2 2 4 3 6 3C8 27 0 19 2 10z" fill="#3ecf8e" /></svg>
        </TaskIcon>
        <TaskIcon open>
          <svg width="24" height="22" viewBox="0 0 24 22"><path d="M1 1h9l2 3h11v17H1z" fill="#f2c14e" /><rect x="1" y="6" width="22" height="15" fill="#fcd66a" /><rect x="8" y="13" width="9" height="8" fill="#2a88d8" /></svg>
        </TaskIcon>
        <TaskIcon>
          <svg width="22" height="25" viewBox="0 0 22 25"><path d="M7 6V3a4 4 0 0 1 8 0v3" fill="none" stroke="#2a9fd8" strokeWidth="1.500" /><rect y="6" width="22" height="19" rx="3" fill="#fff" /><rect x="6" y="10" width="4.500" height="4.500" fill="#e8532c" /><rect x="11.500" y="10" width="4.500" height="4.500" fill="#7cb82f" /><rect x="6" y="15.500" width="4.500" height="4.500" fill="#2a9fd8" /><rect x="11.500" y="15.500" width="4.500" height="4.500" fill="#f7b700" /></svg>
        </TaskIcon>
        <TaskIcon>
          <svg width="24" height="24" viewBox="0 0 24 24"><path d="M0 9L12 0l12 9v15H0z" fill="#0f8ad8" /><path d="M0 9l12 9 12-9v2l-12 8L0 11z" fill="#d8f0ff" /><path d="M0 9l12-6 12 6-12 8z" fill="#fff" /></svg>
        </TaskIcon>
        <TaskIcon open>
          <div className="w-[21px] h-[24px] bg-[#f3f5fa] border border-[#8aa0c8] flex items-start justify-center pt-[2px]">
            <span className="w-full bg-[#2a5699] text-white text-[10px] leading-[12px] font-bold italic text-center [font-family:'Liberation_Serif',serif]">W</span>
          </div>
        </TaskIcon>
        <TaskIcon>
          <svg width="24" height="24" viewBox="0 0 24 24"><circle cx="12" cy="12" r="12" fill="#2fa84f" /><path d="M12 0a12 12 0 0 1 10.400 6H12a6 6 0 0 0-5.500 3.500L2 4a12 12 0 0 1 10-4z" fill="#e8453c" /><path d="M22.400 6A12 12 0 0 1 11 24l5.200-9A6 6 0 0 0 16 6z" fill="#fbc02d" /><circle cx="12" cy="12" r="5.500" fill="#fff" /><circle cx="12" cy="12" r="4.300" fill="#3f87e8" /></svg>
        </TaskIcon>
        <TaskIcon open>
          <svg width="24" height="24" viewBox="0 0 24 24"><rect width="24" height="24" fill="#1b7fd4" /><circle cx="17" cy="6" r="2.500" fill="#bfe3ff" /><path d="M0 20l8-9 7 7 4-3 5 5v4H0z" fill="#0a4f96" /></svg>
        </TaskIcon>
        <TaskIcon open>
          <div className="relative w-[24px] h-[24px] bg-[#eef6ee] border border-[#8fc08f] flex items-center justify-center">
            <span className="absolute left-px top-[3px] w-[12px] h-[13px] bg-[#1f7a3d] text-white text-[10px] leading-[13px] font-bold text-center">X</span>
            <svg className="ml-[10px] mt-[8px]" width="11" height="12" viewBox="0 0 11 12" fill="#68a868"><rect width="5" height="3" /><rect x="6" width="5" height="3" /><rect y="4" width="5" height="3" /><rect x="6" y="4" width="5" height="3" /><rect y="8" width="5" height="3" /><rect x="6" y="8" width="5" height="3" /></svg>
          </div>
        </TaskIcon>
        <TaskIcon open>
          <svg width="24" height="24" viewBox="0 0 24 24"><path d="M17 0l7 3v18l-7 3L7 14l-4 3-3-1.500v-7L3 7l4 3zM17 7l-5 5 5 5z" fill="#1a8fe0" fillRule="evenodd" /></svg>
        </TaskIcon>
        <TaskIcon open>
          <svg width="24" height="24" viewBox="0 0 24 24"><rect width="24" height="24" rx="2" fill="#1f4e74" /><path d="M5 5c6 0 10 4 11 9l3 5M8 5c-1 5 2 8 6 11M18 2l2 5M20 4l-3 1" fill="none" stroke="#cfe0ea" strokeWidth="0.9" /></svg>
        </TaskIcon>
        <div className="w-[49px] h-[40px] bg-[#3a3a3a] border-b-2 border-[#76b9ed] flex items-center justify-center">
          <div className="w-[24px] h-[24px] bg-[#f5f8fa] flex items-center justify-center"><TableauMark c="#2f82c0" size={18} /></div>
        </div>
        <div className="ml-[131px] flex items-center">
          <svg width="24" height="26" viewBox="0 0 24 26"><circle cx="10" cy="14" r="10" fill="#f08c1e" /><circle cx="19" cy="4" r="3" fill="#d8352c" /><path d="M8 21a3.500 3.500 0 0 1 0-7 5 5 0 0 1 9-1 4 4 0 0 1 2 8z" fill="#b8d8f0" /></svg>
          <span className="ml-[7px] text-[14px] [font-family:Roboto,sans-serif]">31°C</span>
        </div>
        <ChevronUp size={17} strokeWidth={1.3} color="#fff" className="ml-[23px]" />
        <svg className="ml-[7px]" width="16" height="15" viewBox="0 0 16 15" fill="none" stroke="#fff"><path d="M4 1.500h11v9H7M8 10.500v3M4 13.500h8" /><path d="M.5.500h5v7h-5z" fill="#161616" /></svg>
        <svg className="ml-[8px]" width="16" height="15" viewBox="0 0 16 15" fill="none" stroke="#fff"><path d="M1 5h3l4-4v13l-4-4H1zM10.500 5a4 4 0 0 1 0 5M12.500 3a7 7 0 0 1 0 9" /></svg>
        <span className="ml-[10px] text-[11.5px] [font-family:Roboto,sans-serif]">ENG</span>
        <div className="ml-[11px] w-[76px] flex flex-col items-center text-[12px] leading-[18px] [font-family:Roboto,sans-serif]">
          <span>16:43</span>
          <span>11-04-2023</span>
        </div>
        <svg className="ml-[7px]" width="17" height="16" viewBox="0 0 17 16" fill="none" stroke="#fff"><path d="M.500.500h16v12H11l-2.500 3-2.500-3H.500z" /></svg>
      </div>

      {/* Sheet thumbnail shown on tab hover */}
      <div className="absolute left-[301px] top-[474px] w-[203px] h-[204px] bg-white border border-[#7f8c9a] pl-[5px] pt-[7px]">
        <FunnelPlot viewBox="377 224 440.800 434" className="w-[191px] h-[190px] block" />
      </div>

      {/* Windows activation watermark */}
      <div className="absolute left-[1073px] top-[649px] text-[#a8a8a8]/80 [font-family:'Noto_Sans',sans-serif] pointer-events-none whitespace-nowrap">
        <div className="text-[20px] leading-[27px]">Activate Windows</div>
        <div className="text-[14px] leading-[19px] mt-[1px]">Go to Settings to activate Windows.</div>
      </div>
    </div>
  );
};

export default App;
